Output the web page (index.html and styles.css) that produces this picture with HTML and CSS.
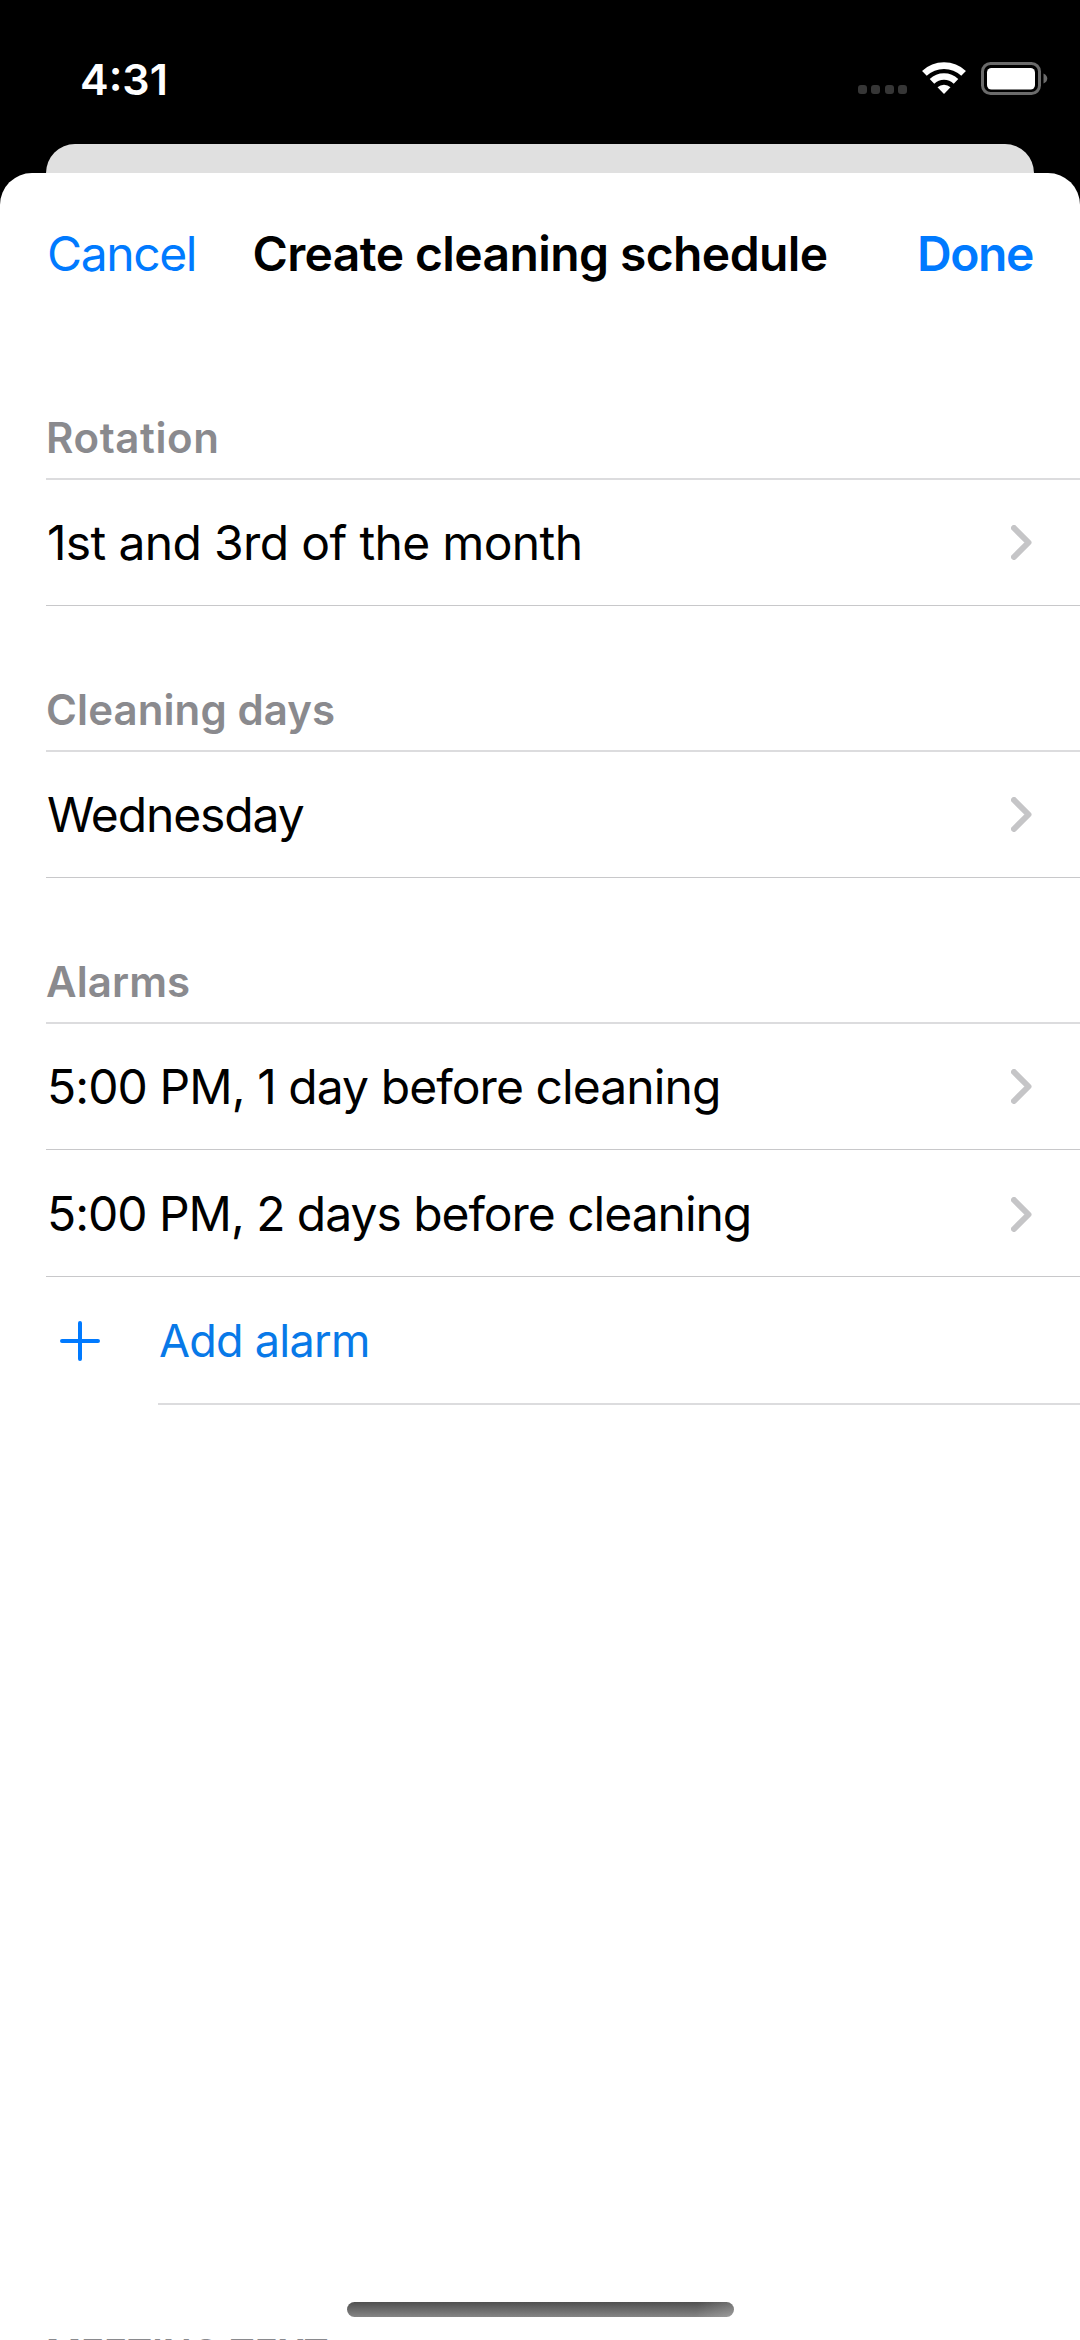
FILE: index.html
```html
<!DOCTYPE html>
<html lang="en">
<head>
<meta charset="utf-8">
<title>Create cleaning schedule</title>
<link rel="stylesheet" href="styles.css">
</head>
<body>
<svg width="0" height="0" class="defs"><symbol id="chevron" viewBox="0 0 21 35"><path d="M3 3 17.5 17.5 3 32" fill="none" stroke="#c5c5c7" stroke-width="6" stroke-linecap="round" stroke-linejoin="round"/></symbol></svg>
<div class="screen">
  <header class="status">
    <span class="time t">4:31</span>
    <div class="indicators">
      <div class="dots"><i></i><i></i><i></i><i></i></div>
      <svg class="wifi" width="44" height="33" viewBox="0 0 44 33"><g fill="none" stroke="#fff"><path d="M2.4 11.4A28.5 28.5 0 0 1 41.6 11.4" stroke-width="6.800"/><path d="M10 19.3A17.5 17.5 0 0 1 34 19.3" stroke-width="6.600"/></g><path d="M15.5 25.3a9.5 9.5 0 0 1 13 0L22 32z" fill="#fff"/></svg>
      <svg class="battery" width="67" height="33" viewBox="0 0 67 33"><rect x="1.5" y="1.5" width="57" height="30" rx="8" fill="none" stroke="#6b6b6b" stroke-width="3"/><rect x="6" y="6" width="48" height="21.500" rx="4.500" fill="#fff"/><path d="M62.500 11.500c5 2 5 8 0 10z" fill="#6b6b6b"/></svg>
    </div>
  </header>
  <div class="card-behind"></div>
  <main class="sheet">
    <nav class="navbar">
      <span class="cancel t">Cancel</span>
      <h1 class="title t">Create cleaning schedule</h1>
      <span class="done t">Done</span>
    </nav>
    <section class="group">
      <h2><span class="t rotation">Rotation</span></h2>
      <div class="row"><span class="t month">1st and 3rd of the month</span><svg class="chev"><use href="#chevron"/></svg></div>
    </section>
    <section class="group">
      <h2><span class="t days">Cleaning days</span></h2>
      <div class="row"><span class="t wed">Wednesday</span><svg class="chev"><use href="#chevron"/></svg></div>
    </section>
    <section class="group">
      <h2><span class="t days">Alarms</span></h2>
      <div class="row"><span class="t one">5:00 PM, 1 day before cleaning</span><svg class="chev"><use href="#chevron"/></svg></div>
      <div class="row tall"><span class="t two">5:00 PM, 2 days before cleaning</span><svg class="chev"><use href="#chevron"/></svg></div>
      <div class="add">
        <svg class="plus" width="40" height="40" viewBox="0 0 40 40"><path d="M20 2v36M2 20h36" stroke="#007aff" stroke-width="4" stroke-linecap="round"/></svg>
        <div class="add-label"><span class="t">Add alarm</span></div>
      </div>
    </section>
    <footer class="footer"><div class="home"></div><div class="next"><span class="t">MEETING TEXT</span></div></footer>
  </main>
</div>
</body>
</html>
```
FILE: styles.css
```css
* { box-sizing: border-box; }
body { margin: 0; background: #000; font-family: Inter, "Liberation Sans", sans-serif; color: #000; }
h1, h2 { margin: 0; }
.defs { display: block; height: 0; }
.t { white-space: nowrap; }
.screen { width: 1080px; height: 2340px; display: flex; flex-direction: column; overflow: hidden; background: #000; }
.status { height: 144px; flex: none; display: flex; justify-content: space-between; padding: 53px 32px 0 80px; }
.time { color: #fff; font-size: 43px; line-height: 52px; font-weight: 600; }
.indicators { display: flex; padding-top: 9px; }
.dots { display: flex; gap: 4.500px; padding-top: 23px; margin-right: 15px; }
.dots i { width: 9px; height: 9px; border-radius: 3px; background: #363636; }
.battery { margin-left: 15px; }
.card-behind { flex: none; height: 29px; margin: 0 46px; background: #e0e0e0; border-radius: 29px 29px 0 0; }
.sheet { flex: 1; background: #fff; border-radius: 32px 32px 0 0; display: flex; flex-direction: column; overflow: hidden; }
.navbar { flex: none; height: 161px; padding: 52px 47px 0; display: grid; grid-template-columns: 1fr auto 1fr; font-size: 48px; line-height: 58px; }
.cancel, .done { color: #007aff; letter-spacing: -1.4px; }
.title { font-size: 48px; font-weight: 600; letter-spacing: -0.6px; }
.done { font-weight: 600; justify-self: end; }
.group { padding-left: 46px; flex: none; }
.group h2 { height: 146px; border-bottom: 2px solid #dcdcde; font-size: 42px; line-height: 52px; font-weight: 600; color: #8a8a8e; padding-top: 78px; }
.rotation { letter-spacing: 0.6px; }
.days { letter-spacing: 0.1px; }
.row { height: 126px; border-bottom: 1px solid #c8c8ca; font-size: 48px; line-height: 58px; display: flex; justify-content: space-between; align-items: center; padding: 0 48px 0 1px; }
.row.tall { height: 127px; padding-top: 2px; }
.month { letter-spacing: -0.65px; }
.wed { letter-spacing: -1.1px; }
.one { letter-spacing: -0.92px; }
.two { letter-spacing: -1.03px; }
.chev { width: 21px; height: 35px; }
.add { display: flex; align-items: center; height: 128px; padding-left: 14px; }
.add-label { margin-left: 58px; padding-left: 1px; flex: 1; height: 128px; border-bottom: 2px solid #dcdcde; color: #0879e8; font-size: 45px; line-height: 127px; letter-spacing: -0.75px; }
.footer { margin-top: auto; flex: none; height: 38px; overflow: hidden; }
.home { width: 387px; height: 15px; margin: 0 auto; border-radius: 8px; background: linear-gradient(100deg, transparent 90%, rgba(255, 255, 255, 0.2)), linear-gradient(#505050, #858585); }
.next { padding-left: 46px; font-size: 38px; line-height: 48px; font-weight: 600; color: #8a8a8e; margin-top: 12px; }
```
